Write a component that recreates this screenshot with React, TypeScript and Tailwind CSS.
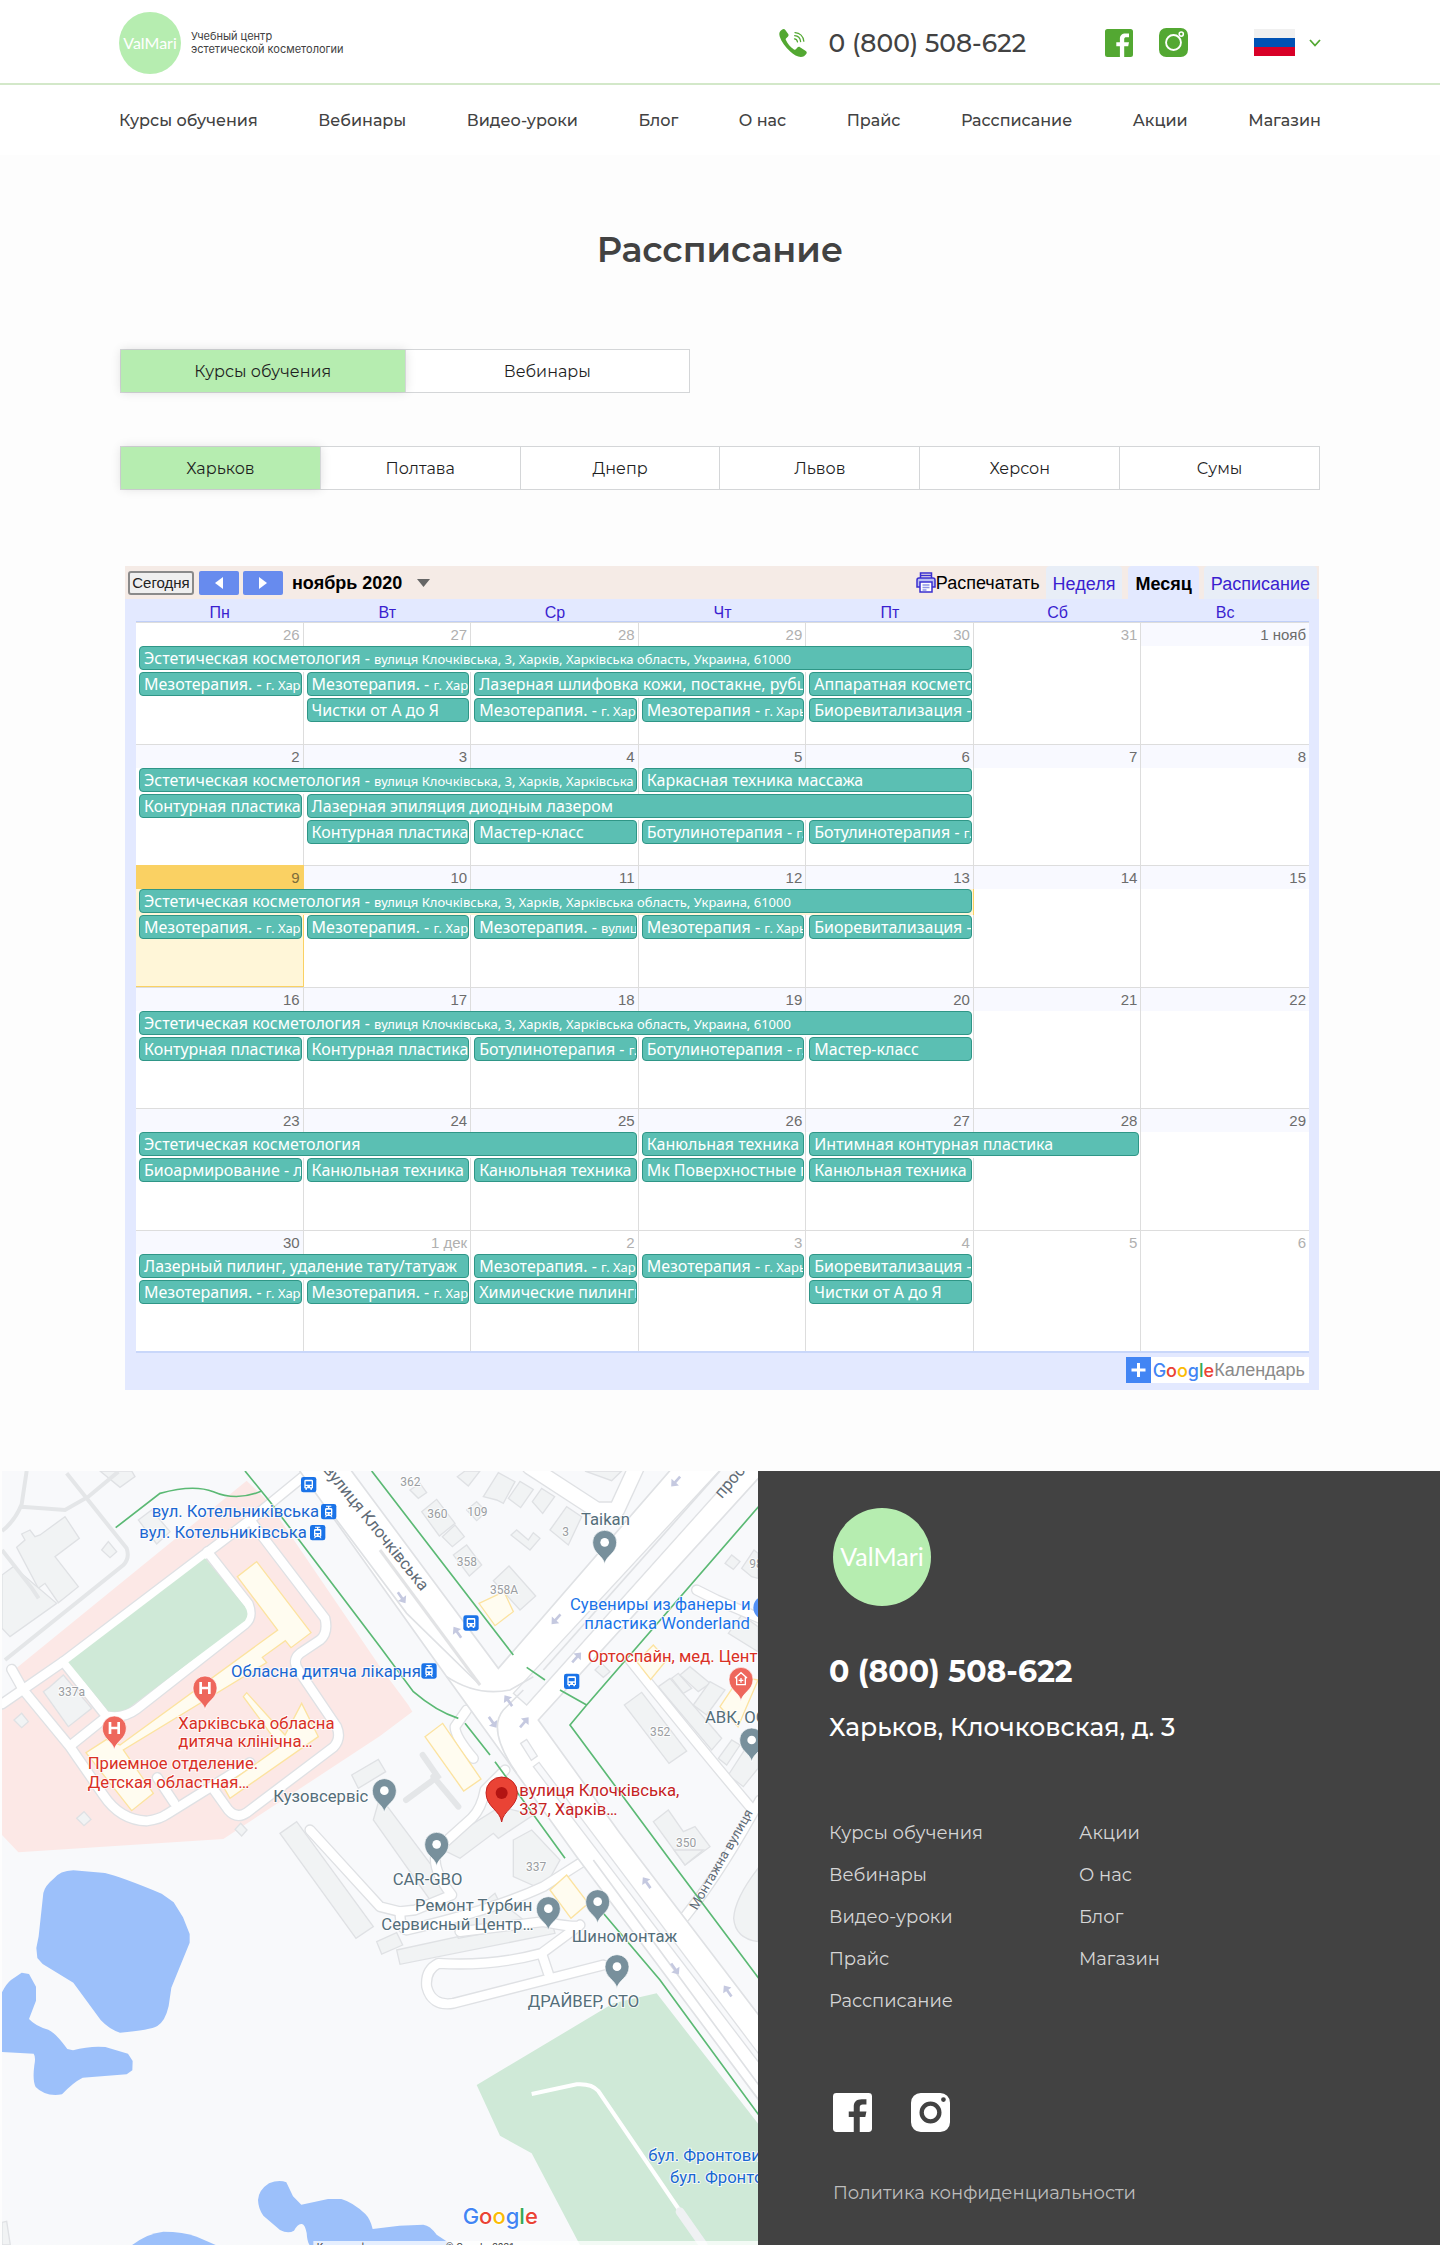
import { useState } from "react";
import type { ReactNode } from "react";

const mainFont = "font-[Montserrat,Inter,sans-serif]";

type EventItem = { title: string; place?: string; span?: number } | null;
type Week = { days: string[]; muted: number[]; plain: number[]; today?: number; rows: EventItem[][] };

const address = "вулиця Клочківська, 3, Харків, Харківська область, Украина, 61000";
const kharkov = "г. Харьков";

const meso: EventItem = { title: "Мезотерапия.", place: kharkov };
const meso2: EventItem = { title: "Мезотерапия", place: kharkov };
const bio: EventItem = { title: "Биоревитализация", place: kharkov };
const botox: EventItem = { title: "Ботулинотерапия", place: kharkov };
const contour: EventItem = { title: "Контурная пластика" };
const cannula: EventItem = { title: "Канюльная техника" };
const peel: EventItem = { title: "Чистки от А до Я" };
const master: EventItem = { title: "Мастер-класс" };
const longCourse: EventItem = { title: "Эстетическая косметология", place: address, span: 5 };

const weeks: Week[] = [
  {
    days: ["26", "27", "28", "29", "30", "31", "1 нояб"],
    muted: [0, 1, 2, 3, 4, 5],
    plain: [0, 1, 2, 3, 4, 5],
    rows: [
      [longCourse, null, null],
      [
        meso,
        meso,
        { title: "Лазерная шлифовка кожи, постакне, рубцы", span: 2 },
        { title: "Аппаратная косметология" },
        null,
        null,
      ],
      [null, peel, meso, meso2, bio, null, null],
    ],
  },
  {
    days: ["2", "3", "4", "5", "6", "7", "8"],
    muted: [],
    plain: [],
    rows: [
      [
        { title: "Эстетическая косметология", place: address, span: 3 },
        { title: "Каркасная техника массажа", span: 2 },
        null,
        null,
      ],
      [contour, { title: "Лазерная эпиляция диодным лазером", span: 4 }, null, null],
      [null, contour, master, botox, botox, null, null],
    ],
  },
  {
    days: ["9", "10", "11", "12", "13", "14", "15"],
    muted: [],
    plain: [],
    today: 0,
    rows: [
      [longCourse, null, null],
      [meso, meso, { title: "Мезотерапия.", place: "вулиця Клочківська" }, meso2, bio, null, null],
      [null, null, null, null, null, null, null],
    ],
  },
  {
    days: ["16", "17", "18", "19", "20", "21", "22"],
    muted: [],
    plain: [],
    rows: [
      [longCourse, null, null],
      [contour, contour, botox, botox, master, null, null],
      [null, null, null, null, null, null, null],
    ],
  },
  {
    days: ["23", "24", "25", "26", "27", "28", "29"],
    muted: [],
    plain: [],
    rows: [
      [
        { title: "Эстетическая косметология", span: 3 },
        cannula,
        { title: "Интимная контурная пластика", span: 2 },
        null,
      ],
      [
        { title: "Биоармирование - лицо" },
        cannula,
        cannula,
        { title: "Мк Поверхностные пилинги" },
        cannula,
        null,
        null,
      ],
      [null, null, null, null, null, null, null],
    ],
  },
  {
    days: ["30", "1 дек", "2", "3", "4", "5", "6"],
    muted: [1, 2, 3, 4, 5, 6],
    plain: [1, 2, 3, 4, 5, 6],
    rows: [
      [{ title: "Лазерный пилинг, удаление тату/татуаж", span: 2 }, meso, meso2, bio, null, null],
      [meso, meso, { title: "Химические пилинги" }, null, peel, null, null],
      [null, null, null, null, null, null, null],
    ],
  },
];

function FacebookIcon({ className }: { className: string }) {
  return (
    <svg viewBox="0 0 28 28" className={className} fill="currentColor" aria-hidden="true">
      <path d="M2.5 0h23A2.5 2.5 0 0 1 28 2.5v23a2.5 2.5 0 0 1-2.5 2.5h-6.3V17.3h4l.8-4.1h-4.8v-2.9c0-1.6.8-2.1 2.2-2.1H24V4.4h-3.4c-3.8 0-5.7 2-5.7 5.3v3.5h-3.6v4.1h3.6V28H2.5A2.5 2.5 0 0 1 0 25.500v-23A2.5 2.500 0 0 1 2.500 0z" />
    </svg>
  );
}

function InstagramIcon({ className }: { className: string }) {
  return (
    <svg viewBox="0 0 28 28" className={className} fill="currentColor" aria-hidden="true">
      <path
        fillRule="evenodd"
        d="M7 0h14a7 7 0 0 1 7 7v14a7 7 0 0 1-7 7H7a7 7 0 0 1-7-7V7a7 7 0 0 1 7-7zm7 6.100a7.900 7.900 0 1 0 0 15.800 7.900 7.900 0 0 0 0-15.800zm0 3.100a4.800 4.800 0 1 1 0 9.600 4.800 4.800 0 0 1 0-9.600zM23.300 3a1.700 1.700 0 1 0 0 3.400 1.700 1.700 0 0 0 0-3.400z"
      />
    </svg>
  );
}

function InstagramOutlineIcon({ className }: { className: string }) {
  return (
    <svg viewBox="0 0 28 28" className={className} fill="none" aria-hidden="true">
      <rect width="28" height="28" rx="7" fill="currentColor" />
      <circle cx="14" cy="14" r="7.200" stroke="#fff" strokeWidth="1.800" />
      <circle cx="21.500" cy="5.900" r="2" stroke="#fff" strokeWidth="1.500" />
    </svg>
  );
}

function PhoneIcon() {
  return (
    <svg viewBox="0 0 28 28" className="size-7 text-[#53a832]" fill="none" aria-hidden="true">
      <path
        fill="currentColor"
        d="M3.200.6c1-.7 2.300-.7 3.100.3l2.900 4.200c.6.9.4 2-.4 2.700L7.200 9.200c-.6.500-.6 1.200-.3 1.900 1.800 3.900 4.300 6.900 8.100 9.400.7.400 1.400.4 1.900-.2l1.500-1.700c.7-.8 1.700-1 2.600-.4l5.800 3.700c1 .7 1.200 1.800.6 2.800-1.300 2-3.200 3.300-5.600 3.300-3.300 0-7-2-10.600-5.400C6.300 18 2.400 12.600.7 7.400-.3 4.300.6 2.200 3.200.6z"
      />
      <g stroke="currentColor" strokeWidth="1.300" strokeLinecap="round">
        <path d="M15.500 9.800c1.600.2 2.700 1.300 3 3" />
        <path d="M15.700 6.700c3.200.3 5.500 2.600 5.900 5.800" />
        <path d="M16 3.600c4.800.4 8.300 3.800 8.800 8.600" />
      </g>
    </svg>
  );
}

function Logo({ large = false }: { large?: boolean }) {
  return (
    <a
      href="#"
      className={
        "flex shrink-0 items-center justify-center rounded-full bg-[#b6edb0] font-[Lato,sans-serif] text-white " +
        (large ? "size-[98px] text-[25px]" : "size-[62px] text-[16px]")
      }
    >
      ValMari
    </a>
  );
}

const navItems = [
  "Курсы обучения",
  "Вебинары",
  "Видео-уроки",
  "Блог",
  "О нас",
  "Прайс",
  "Рассписание",
  "Акции",
  "Магазин",
];

function Header() {
  return (
    <header className="bg-white text-[#424242]">
      <div className="border-b-2 border-[#d3e8c9]">
        <div className="mx-auto flex h-[83px] w-full max-w-[1202px] items-center pt-[2px]">
          <Logo />
          <p className="ml-[10px] font-[Inter,sans-serif] text-[11px] leading-[13px]">
            Учебный центр
            <br />
            эстетической косметологии
          </p>
          <a
            href="tel:0800508622"
            className="ml-auto flex items-center gap-[22px] text-[25px] leading-8 font-medium"
          >
            <PhoneIcon />
            0 (800) 508-622
          </a>
          <div className="ml-[79px] flex items-center gap-[26px] text-[#53a832]">
            <a href="#" aria-label="Facebook">
              <FacebookIcon className="size-7" />
            </a>
            <a href="#" aria-label="Instagram">
              <InstagramOutlineIcon className="size-[29px]" />
            </a>
          </div>
          <button type="button" aria-label="Язык" className="ml-[66px] flex items-center gap-[14px]">
            <span className="flex h-[27px] w-[41px] flex-col">
              <span className="flex-1 bg-[#f0f0f0]" />
              <span className="flex-1 bg-[#0052b4]" />
              <span className="flex-1 bg-[#d80027]" />
            </span>
            <svg viewBox="0 0 12 8" className="h-2 w-3" fill="none" stroke="#53a832" strokeWidth="1.800">
              <path d="M1 1l5 5.500L11 1" />
            </svg>
          </button>
        </div>
      </div>
      <nav className="mx-auto flex h-[70px] w-full max-w-[1202px] items-center justify-between pt-[2px] text-[16px] font-medium">
        {navItems.map((item) => (
          <a key={item} href="#">
            {item}
          </a>
        ))}
      </nav>
    </header>
  );
}

function Tabs({ items, className }: { items: string[]; className: string }) {
  const [active, setActive] = useState(0);
  return (
    <div className={"flex border border-[#d4d6d8] bg-white text-[#1f1f1f] " + className}>
      {items.map((item, i) => (
        <button
          key={item}
          type="button"
          aria-pressed={i === active}
          onClick={() => setActive(i)}
          className={
            "h-[42px] flex-1 border-[#d4d6d8] pt-[2px] text-[16px] not-last:border-r " +
            (i === active ? "bg-[#b6edb0] shadow-[0_0_10px_rgba(0,0,0,0.12)]" : "")
          }
        >
          {item}
        </button>
      ))}
    </div>
  );
}

function PrinterIcon() {
  return (
    <svg viewBox="0 0 20 21" className="h-[21px] w-5" fill="none" stroke="#3a2fd0" strokeWidth="1.500" aria-hidden="true">
      <path d="M4.500 6V1h11v5M4.500 3.500h11" />
      <path d="M4 15H1V8q0-2 2-2h14q2 0 2 2v7h-3" fill="#b9bdf2" />
      <path d="M4 10h12v10H4z" fill="#fff" />
      <path d="M6.500 13h7M6.500 15.500h7M6.500 18h4" stroke="#8f95e6" />
    </svg>
  );
}

function GoogleWord() {
  return (
    <>
      <span className="text-[#4285f4]">G</span>
      <span className="text-[#ea4335]">o</span>
      <span className="text-[#fbbc05]">o</span>
      <span className="text-[#4285f4]">g</span>
      <span className="text-[#34a853]">l</span>
      <span className="text-[#ea4335]">e</span>
    </>
  );
}

function WeekRows({ week, tall }: { week: Week; tall: boolean }) {
  return (
    <>
      <tr className="h-6">
        {week.days.map((day, i) => (
          <td
            key={i}
            className={
              "border-t border-r pr-[3px] text-right text-[15px] leading-[22px] last:border-r-0 " +
              (week.today === i
                ? "border-[#fad163] bg-[#fad163] text-[#7c6c3c] "
                : week.muted.includes(i)
                  ? "border-[#dddddd] text-[#b0b0b0] "
                  : "border-[#dddddd] text-[#6c6c6c] ") +
              (week.today === i || week.plain.includes(i) ? "" : "bg-[#f8f9ff]")
            }
          >
            {day}
          </td>
        ))}
      </tr>
      {week.rows.map((row, r) => {
        let col = 0;
        return (
          <tr key={r} className="h-[26px]">
            {row.map((item, i) => {
              const isToday = week.today === col;
              col += item?.span ?? 1;
              return (
                <td
                  key={i}
                  colSpan={item?.span ?? 1}
                  className={
                    "border-r pr-px pb-[2px] pl-[3px] last:border-r-0 " +
                    (isToday ? "border-[#fad163] bg-[#fff6d8]" : "border-[#dddddd]")
                  }
                >
                  {item && (
                    <a
                      href="#"
                      className="block h-6 overflow-hidden rounded-[4px] border border-[#2f9687] bg-[#5bbfb3] pl-1 font-['Noto_Sans',sans-serif] text-[16px] leading-[22px] whitespace-nowrap text-white"
                    >
                      {item.title}
                      {item.place && (
                        <>
                          {" - "}
                          <span className="text-[13px]">{item.place}</span>
                        </>
                      )}
                    </a>
                  )}
                </td>
              );
            })}
          </tr>
        );
      })}
      <tr className={tall ? "h-5" : "h-[19px]"}>
        {week.days.map((day, i) => (
          <td
            key={day}
            className={
              "border-r last:border-r-0 " +
              (week.today === i ? "border-b border-[#fad163] bg-[#fff6d8]" : "border-[#dddddd]")
            }
          />
        ))}
      </tr>
    </>
  );
}

function Calendar() {
  return (
    <section
      aria-label="Календарь"
      className="mt-[76px] mr-[2px] ml-[6px] bg-[#e3e9ff] font-['Liberation_Sans',Arial,sans-serif]"
    >
      <div className="flex h-[33px] items-center bg-[#f5ebe6] pr-[2px] pl-[3px] text-black">
        <button
          type="button"
          className="h-6 w-[66px] rounded-[3px] border-2 border-[#8a8a8a] bg-[#efefef] text-[15px] leading-5 text-[#222]"
        >
          Сегодня
        </button>
        <button
          type="button"
          aria-label="Назад"
          className="ml-[5px] flex h-6 w-10 items-center justify-center rounded-[2px] bg-[#678bee]"
        >
          <svg viewBox="0 0 8 12" className="h-3 w-2" fill="#fff">
            <path d="M8 0v12L0 6z" />
          </svg>
        </button>
        <button
          type="button"
          aria-label="Вперёд"
          className="ml-1 flex h-6 w-10 items-center justify-center rounded-[2px] bg-[#678bee]"
        >
          <svg viewBox="0 0 8 12" className="h-3 w-2" fill="#fff">
            <path d="M0 0v12l8-6z" />
          </svg>
        </button>
        <button type="button" className="ml-[9px] flex items-center gap-[15px] text-[18px] leading-6 font-bold">
          ноябрь 2020
          <svg viewBox="0 0 13 8" className="h-2 w-[13px]" fill="#666">
            <path d="M0 0h13L6.500 8z" />
          </svg>
        </button>
        <button type="button" className="ml-auto flex items-center text-[18px] leading-6">
          <PrinterIcon />
          Распечатать
        </button>
        <button
          type="button"
          className="ml-[6px] h-full rounded-t-[4px] bg-[#e8eef7] px-[7px] pt-1 text-[18px] text-[#3a1fd0]"
        >
          Неделя
        </button>
        <button type="button" className="ml-[6px] h-full rounded-t-[4px] bg-[#e3e9ff] px-[7px] pt-1 text-[18px] font-bold">
          Месяц
        </button>
        <button
          type="button"
          className="ml-[5px] h-full rounded-t-[4px] bg-[#e8eef7] px-[7px] pt-1 text-[18px] text-[#3a1fd0]"
        >
          Расписание
        </button>
      </div>
      <div className="pr-[10px] pl-[11px]">
        <table className="w-full table-fixed border-separate border-spacing-0 bg-white">
          <thead>
            <tr className="h-[23px]">
              {["Пн", "Вт", "Ср", "Чт", "Пт", "Сб", "Вс"].map((d) => (
                <th
                  key={d}
                  className="border-b border-[#c0cff8] bg-[#e3e9ff] pt-[6px] text-[16px] leading-4 font-normal text-[#3a1fd0]"
                >
                  {d}
                </th>
              ))}
            </tr>
          </thead>
          <tbody>
            {weeks.map((week, i) => (
              <WeekRows key={i} week={week} tall={i % 2 === 0} />
            ))}
          </tbody>
        </table>
        <div className="flex h-[39px] justify-end border-t-2 border-[#c9d7fa] pt-1">
          <a href="#" className="flex h-[26px] items-center bg-white pr-1 text-[18px] text-[#8a8a8a]">
            <svg viewBox="0 0 25 26" className="h-[26px] w-[25px]" aria-hidden="true">
              <path d="M0 0h25v26H0z" fill="#4285f4" />
              <path d="M12.500 6v14M5.500 13h14" stroke="#fff" strokeWidth="3" />
            </svg>
            <span className="ml-[2px] font-[Inter,sans-serif] text-[18px] font-medium">
              <GoogleWord />
            </span>
            Календарь
          </a>
        </div>
      </div>
    </section>
  );
}

function Roads({ width, children }: { width: number; children: ReactNode }) {
  return (
    <g fill="none" strokeLinejoin="round" strokeLinecap="round">
      <g stroke="#dfe1e4" strokeWidth={width + 8}>
        {children}
      </g>
      <g stroke="#ffffff" strokeWidth={width}>
        {children}
      </g>
    </g>
  );
}

function Pin({ x, y, color = "#78909c", children }: { x: number; y: number; color?: string; children?: ReactNode }) {
  return (
    <g transform={`translate(${x} ${y})`}>
      <path d="M0 66C-3 40-36 34-36 0a36 36 0 0 1 72 0C36 34 3 40 0 66z" fill={color} stroke="#fff" strokeWidth="2" />
      {children ?? <circle r="13" fill="#fff" />}
    </g>
  );
}

function BusStop({ x, y }: { x: number; y: number }) {
  return (
    <g transform={`translate(${x} ${y})`}>
      <rect width="46" height="46" rx="7" fill="#1a73e8" />
      <path d="M10 12q0-4 4-4h18q4 0 4 4v22h-3v4h-5v-4H18v4h-5v-4h-3z" fill="#fff" />
      <path d="M14 13h18v10H14zM14 27h5v4h-5zM27 27h5v4h-5z" fill="#1a73e8" />
    </g>
  );
}

function TramStop({ x, y }: { x: number; y: number }) {
  return (
    <g transform={`translate(${x} ${y})`}>
      <rect width="46" height="46" rx="7" fill="#1a73e8" />
      <path d="M15 5h16v3h-6v4h5q4 0 4 4v16q0 3-3 3l4 5h-4l-3-4H18l-3 4h-4l4-5q-3 0-3-3V16q0-4 4-4h5V8h-6z" fill="#fff" />
      <path d="M16 17h14v7H16zM16 28h4v4h-4zM26 28h4v4h-4z" fill="#1a73e8" />
    </g>
  );
}

const arrows: [number, number, number][] = [
  [1205, 413, 55],
  [1372, 517, 235],
  [1668, 478, 132],
  [1730, 592, -48],
  [1525, 722, 235],
  [1478, 787, 55],
  [1573, 787, -50],
  [2027, 65, 132],
  [1940, 1268, 235],
  [2025, 1527, 55],
  [2183, 1593, 235],
];

const grayBuildings = [
  "50,262 75,240 65,222 90,210 105,230 120,225 195,170 238,235 165,290 235,380 175,428 135,370 115,385",
  "6,345 40,320 170,430 30,530 6,505",
  "300,33 360,82 405,50 395,33",
  "415,180 455,150 510,215 470,252",
  "305,270 325,245 350,275 330,293",
  "130,695 150,680 190,645 275,745 205,800",
  "42,780 65,760 85,785 65,803",
  "230,1075 252,1055 273,1078 252,1097",
  "705,1108 722,1090 741,1110 725,1128",
  "1055,945 1135,898 1157,935 1075,985",
  "840,1120 890,1085 1120,1400 1068,1435",
  "1265,155 1310,118 1365,190 1318,228",
  "1327,230 1365,195 1393,230 1357,260",
  "1360,285 1400,255 1445,315 1408,348",
  "1480,362 1527,318 1607,408 1560,450",
  "1450,110 1495,38 1545,65 1510,130 1490,120",
  "1525,115 1560,64 1600,88 1562,143",
  "1597,125 1625,85 1664,110 1628,160",
  "1372,50 1395,33 1440,33 1405,78",
  "1533,225 1550,210 1585,240 1600,218 1620,235 1590,270",
  "1650,210 1700,140 1745,170 1705,255",
  "1230,90 1260,70 1280,98 1255,115",
  "1400,150 1430,125 1460,155 1430,182",
  "2175,310 2195,285 2220,305 2200,328",
  "2225,325 2262,270 2274,280 2274,355 2255,350",
  "1785,630 1805,610 1830,635 1810,652",
  "1873,735 1925,697 2060,873 2007,910",
  "1975,680 2010,655 2165,835 2135,870",
  "2015,655 2035,640 2075,685 2050,700",
  "2040,645 2070,620 2130,670 2095,695",
  "2080,735 2130,665 2175,690 2120,765",
  "2155,895 2195,840 2220,855 2180,915",
  "2185,945 2240,860 2274,880 2274,925 2230,980",
  "1960,1085 2005,1050 2050,1115 2085,1100 2130,1160 2055,1215",
  "1540,1140 1595,1110 1680,1200 1630,1290 1540,1250",
  "1310,1160 1500,1040 1600,1065 1495,1135 1480,1120 1380,1195",
  "1140,1010 1350,1290 1290,1320 1120,1080",
  "1190,1470 1650,1370 1665,1420 1200,1513",
  "1130,1445 1190,1418 1208,1455 1145,1482",
  "1360,1400 1485,1300 1495,1320 1590,1395 1375,1435",
  "2022,1170 2110,1170 2055,1215",
  "2185,520 2225,465 2274,500 2274,575",
  "1755,33 1865,33 1835,62",
];

function Label({
  x,
  y,
  fill = "#546e7a",
  size = 50,
  children,
}: {
  x: number;
  y: number;
  fill?: string;
  size?: number;
  children: ReactNode;
}) {
  return (
    <text x={x} y={y} fill={fill} fontSize={size} stroke="#ffffff" strokeWidth="6" strokeOpacity="0.800" paintOrder="stroke">
      {children}
    </text>
  );
}

function CityMap() {
  return (
    <svg
      viewBox="6 33 2268 2322"
      className="block h-auto w-full font-[Roboto,sans-serif]"
      role="img"
      aria-label="Карта проезда"
    >
      <path d="M0 0h2280v2400H0z" fill="#f8f9fb" />

      {/* hospital grounds */}
      <path d="M740 62L45 628l25 62-64 50v385l49 52 615-40 470-309 97-73-12-20-85-115L800 120z" fill="#fce8e6" />

      {/* lakes */}
      <g fill="#9cc0fa" transform="translate(0 1170)">
        <path d="M160 87q20-25 60-26l95 8q50 12 170 62l36 26 28 45 20 50v26l-55 135-8 55q-10 45-34 60-20 12-112 20-32-10-58-38l-82-112-92-56-16-18-3-30 7-35 14-130q5-22 30-42z" />
        <path d="M6 427q12-25 27-37l32-22 22 4 21 38v42l-21 55q20 22 58 32 22 10 57 58l17 4q50-14 97-10l68 20 14 22-1 28-17 12-132 10q-30 15-62 50-50 8-79-22-10-20-4-65 5-25-2-35L6 606z" />
        <path d="M774 1050q2-30 33-50 30-12 52-3l20 42 25 25 80-17h40q35 10 72 45 15 15 22 45l80-10 72-3q20 2 40 30l60 40H940q-18-5-20-45-5-25-14-27-12-3-24 20-18 10-42-2l-50-43q-15-20-16-47z" />
        <path d="M390 1190q50-40 100-45 60 0 100 15l80 35z" />
      </g>

      {/* park */}
      <path d="M1970 1600l-130 30-410 245 70 152 95 53 150 285h540V2005z" fill="#cfe9d7" />

      {/* buildings */}
      <g fill="#f1f3f4" stroke="#dfe1e4" strokeWidth="4">
        {grayBuildings.map((points) => (
          <polygon key={points} points={points} />
        ))}
        <path d="M2274 1225q-70 90-73 150 5 60 73 70z" />
        <path d="M6 2287l14-3 11 71H6z" />
      </g>

      {/* minor paths */}
      <g fill="none" stroke="#e4e6e8" strokeWidth="12">
        <path d="M80 33l-15 100q-20 50-59 80M65 140l130 10 70-40 90-75" />
        <path d="M200 40l180 225q10 30-10 50L15 600M6 270l90 115 20 30" />
        <path d="M1268 885l45 65-95 70M1300 950l75 90" strokeWidth="18" strokeLinecap="round" />
      </g>

      <Roads width={26}>
        <path d="M6 732L190 605 750 180 930 33" />
        <path d="M35 628l35 62 140 170 100 145q50 75 130 78 40-5 60-20l105-65 145-90" />
        <path d="M190 605l130 165-110 88M320 767q50 10 90-20l325-255q25-20 10-60L622 275" />
        <path d="M750 180l225 295q10 45-15 65l-60 40q-25 20-5 50l115 170q15 35-10 62l-260 196q-30 20-55-8l-50-70" />
        <path d="M472 953l50 75" />
        <path d="M930 1110l210 230 60 15 45-5 110-45q-70-90-40-140l100-90q30-30 40-85l60-60M1400 750l-35 50q0 30 55 95" />
        <path d="M1200 1355q0 50 20 55 260-60 410-130l110-70" />
        <path d="M1380 1415l250-30q100 20 110 10l-115 85q-150 40-310 30-40 20-35 70 15 60 80 50l450-115M1625 1480l20 60" />
        <path d="M2090 390l60 30 130 55" />
        <path d="M1890 600q200 250 360 440M2030 1400q120-140 250-380" />
      </Roads>
      <Roads width={44}>
        <path d="M1590 20l200 130h60l60-130" />
      </Roads>

      {/* sports ground */}
      <path d="M615 295L735 440q15 22 0 42L385 745q-35 15-60 8L205 607z" fill="#cfe9d7" />

      {/* avenues */}
      <g stroke="#dfe1e4" strokeWidth="5">
        <path
          d="M890 20h155l450 605L2020 20h260v30L1615 780l245 340 420 550v255L1730 1190 1340 650z"
          fill="#ffffff"
        />
      </g>
      <g fill="#f8f9fb" stroke="#dfe1e4" strokeWidth="4">
        <path d="M1540 700l40 35L2220 20h-50z" />
        <path d="M1562 850l18-12 32 50-18 13z" />
        <path d="M1600 920l17-13 663 880v25z" />
      </g>
      <g fill="none" stroke="#dfe1e4" strokeWidth="5">
        <path d="M980 140l240 320 220 215M1780 1200l500 680M1340 650q90 60 190 40l70-40M1550 940q-90-130-40-190l60-60" />
        <path d="M1630 630L2160 33" />
      </g>
      <path
        d="M1140 270l300 405"
        fill="none"
        stroke="#e2e3e5"
        strokeWidth="9"
      />

      {/* commercial buildings */}
      <g fill="#fffcf0" stroke="#fce3a0" strokeWidth="4">
        <path d="M770 305l163 213-60 45-17-21-69 50 13 16-430 262 90 130-65 52-137-174 62-40 40 17 473-345L712 350z" />
        <path d="M905 730l50 100-265 185-20-35 170-120-110-150 10-12 115 127z" />
        <path d="M1275 830l53-40 115 167-52 36z" />
        <path d="M1437 430l75-35 28 60-55 42z" />
        <path d="M1910 605l50-50 40 45-48 58z" />
        <path d="M2160 740l60-90 54 10-60 140z" />
        <path d="M1650 1290l50-45 65 85-52 45z" />
      </g>

      {/* bicycle lanes */}
      <g fill="none" stroke="#5bb974" strokeWidth="5">
        <path d="M347 203l133-103q100-28 160-5 70 30 145-2" />
        <path d="M735 33l75 92 330 435 100 135q70 60 135 80M1395 790l75 95M1485 905l210 290M1810 1360l170 200 300 410" />
        <path d="M1115 33l425 552M1580 622l55 38M1680 690l80 45M2280 135L1760 735l-50 60 300 405 270 360" />
      </g>

      {/* park path */}
      <path d="M1595 1902l135-29q45-3 65 20l245 360" fill="none" stroke="#ffffff" strokeWidth="12" />
      <path d="M2040 2255l70 100" stroke="#eff1f3" strokeWidth="26" strokeLinecap="round" />

      {arrows.map(([x, y, angle]) => (
        <path
          key={`${x}-${y}`}
          transform={`translate(${x} ${y}) rotate(${angle})`}
          d="M-20-4H2v-11L20 0 2 15V4h-22z"
          fill="#c5c9e0"
        />
      ))}

      {/* house numbers */}
      <Label x={175} y={708} fill="#9a9da1" size={36}>337а</Label>
      <Label x={1201} y={79} fill="#9a9da1" size={36}>362</Label>
      <Label x={1282} y={174} fill="#9a9da1" size={36}>360</Label>
      <Label x={1402} y={168} fill="#9a9da1" size={36}>109</Label>
      <Label x={1370} y={317} fill="#9a9da1" size={36}>358</Label>
      <Label x={1470} y={402} fill="#9a9da1" size={36}>358А</Label>
      <Label x={1687} y={228} fill="#9a9da1" size={36}>3</Label>
      <Label x={1950} y={827} fill="#9a9da1" size={36}>352</Label>
      <Label x={2028} y={1160} fill="#9a9da1" size={36}>350</Label>
      <Label x={1578} y={1232} fill="#9a9da1" size={36}>337</Label>
      <Label x={2248} y={325} fill="#9a9da1" size={36}>98</Label>

      {/* street names */}
      <g fill="#5f6b76" fontSize="50">
        <text transform="translate(968 30) rotate(51)">вулиця Клочківська</text>
        <text transform="translate(2165 118) rotate(-49)">проспект</text>
        <text transform="translate(2090 1352) rotate(-60)" fontSize="40">
          Монтажна вулиця
        </text>
      </g>

      {/* transit stops */}
      <Label x={455} y={172} fill="#1967d2">вул. Котельниківська</Label>
      <Label x={418} y={235} fill="#1967d2">вул. Котельниківська</Label>
      <Label x={693} y={651} fill="#1967d2">Обласна дитяча лікарня</Label>
      <Label x={1945} y={2102} fill="#1967d2">бул. Фронтовиків</Label>
      <Label x={2010} y={2168} fill="#1967d2">бул. Фронтовиків</Label>
      <BusStop x={903} y={51} />
      <BusStop x={1390} y={466} />
      <BusStop x={1692} y={641} />
      <TramStop x={963} y={132} />
      <TramStop x={930} y={195} />
      <TramStop x={1264} y={610} />

      {/* shops and clinics */}
      <Label x={1710} y={451} fill="#1a73e8">Сувениры из фанеры и</Label>
      <Label x={1753} y={507} fill="#1a73e8">пластика Wonderland</Label>
      <circle cx="2296" cy="443" r="36" fill="#5491f5" />
      <Label x={1763} y={607} fill="#d93025">Ортоспайн, мед. Центр</Label>
      <Pin x={2223} y={658} color="#ee675c">
        <path d="M-18-4L0-20 18-4M-13-6v22h26V-6M0-4v14M-7 3H7" fill="none" stroke="#fff" strokeWidth="4" />
      </Pin>
      <Label x={535} y={806} fill="#d93025">Харківська обласна</Label>
      <Label x={535} y={862} fill="#d93025">дитяча клінічна…</Label>
      <Label x={263} y={927} fill="#d93025">Приемное отделение.</Label>
      <Label x={263} y={984} fill="#d93025">Детская областная…</Label>
      <Pin x={615} y={684} color="#ee675c">
        <path d="M-13-18v36M13-18v36M-13 0h26" stroke="#fff" strokeWidth="8" />
      </Pin>
      <Pin x={343} y={804} color="#ee675c">
        <path d="M-13-18v36M13-18v36M-13 0h26" stroke="#fff" strokeWidth="8" />
      </Pin>

      <Label x={820} y={1027}>Кузовсервіс</Label>
      <Pin x={1153} y={992} />
      <Label x={1743} y={195}>Taikan</Label>
      <Pin x={1814} y={247} />
      <Label x={2115} y={788}>АВК, ООО</Label>
      <Pin x={2255} y={840} />
      <Label x={1178} y={1274}>CAR-GBO</Label>
      <Pin x={1310} y={1153} />
      <Label x={1245} y={1353}>Ремонт Турбин</Label>
      <Label x={1144} y={1410}>Сервисный Центр…</Label>
      <Pin x={1645} y={1346} />
      <Label x={1715} y={1447}>Шиномонтаж</Label>
      <Pin x={1793} y={1325} />
      <Label x={1583} y={1642}>ДРАЙВЕР, СТО</Label>
      <Pin x={1851} y={1520} />

      {/* destination */}
      <path
        d="M1505 1086c-4-35-47-45-47-88a47 47 0 0 1 94 0c0 43-43 53-47 88z"
        fill="#ea4335"
        stroke="#c5221f"
        strokeWidth="3"
      />
      <circle cx="1505" cy="999" r="18" fill="#b31412" />
      <Label x={1558} y={1008} fill="#c5221f">вулиця Клочківська,</Label>
      <Label x={1558} y={1065} fill="#c5221f">337, Харків…</Label>

      <text x="1388" y="2292" fontSize="66" fontWeight="500" className="font-[Inter,sans-serif]" stroke="#fff" strokeWidth="5" paintOrder="stroke">
        <tspan fill="#4285f4">G</tspan>
        <tspan fill="#ea4335">o</tspan>
        <tspan fill="#fbbc05">o</tspan>
        <tspan fill="#4285f4">g</tspan>
        <tspan fill="#34a853">l</tspan>
        <tspan fill="#ea4335">e</tspan>
      </text>
      <path d="M940 2343h1340v20H940z" fill="#ffffff" fillOpacity="0.750" />
      <text x="950" y="2372" fontSize="30" fill="#444">
        Картографические данные © Google, 2021
      </text>
    </svg>
  );
}

const footerLinks = [
  ["Курсы обучения", "Вебинары", "Видео-уроки", "Прайс", "Рассписание"],
  ["Акции", "О нас", "Блог", "Магазин"],
];

function Footer() {
  return (
    <footer className="mt-[81px] grid grid-cols-[758fr_682fr]">
      <div className="pl-[2px]">
        <CityMap />
      </div>
      <div className="bg-[#424242] pt-[37px] pl-[71px] text-white">
        <div className="pl-1">
          <Logo large />
        </div>
        <a href="tel:0800508622" className="mt-12 block text-[30px] leading-9 font-bold">
          0 (800) 508-622
        </a>
        <address className="mt-[21px] text-[25px] leading-8 font-medium not-italic">Харьков, Клочковская, д. 3</address>
        <nav className="mt-[78px] flex text-[18px] leading-6 text-[#d6d6d6]">
          {footerLinks.map((column, i) => (
            <ul key={i} className="flex w-[250px] flex-col gap-[18px]">
              {column.map((item) => (
                <li key={item}>
                  <a href="#">{item}</a>
                </li>
              ))}
            </ul>
          ))}
        </nav>
        <div className="mt-20 flex gap-[39px] pl-1">
          <a href="#" aria-label="Facebook">
            <FacebookIcon className="size-[39px]" />
          </a>
          <a href="#" aria-label="Instagram">
            <InstagramIcon className="size-[39px]" />
          </a>
        </div>
        <a href="#" className="mt-[49px] inline-block pl-1 text-[18px] leading-6 text-[#bdbdbd]">
          Политика конфиденциальности
        </a>
      </div>
    </footer>
  );
}

export default function App() {
  return (
    <div className={"bg-[#fdfdfd] " + mainFont}>
      <Header />
      <main className="mx-auto w-full max-w-[1202px] pt-[73px]">
        <h1 className="text-center text-[35px] leading-[44px] font-semibold text-[#424242]">Рассписание</h1>
        <Tabs items={["Курсы обучения", "Вебинары"]} className="mx-px mt-[77px] max-w-[570px]" />
        <Tabs
          items={["Харьков", "Полтава", "Днепр", "Львов", "Херсон", "Сумы"]}
          className="mx-px mt-[53px]"
        />
        <Calendar />
      </main>
      <Footer />
    </div>
  );
}
